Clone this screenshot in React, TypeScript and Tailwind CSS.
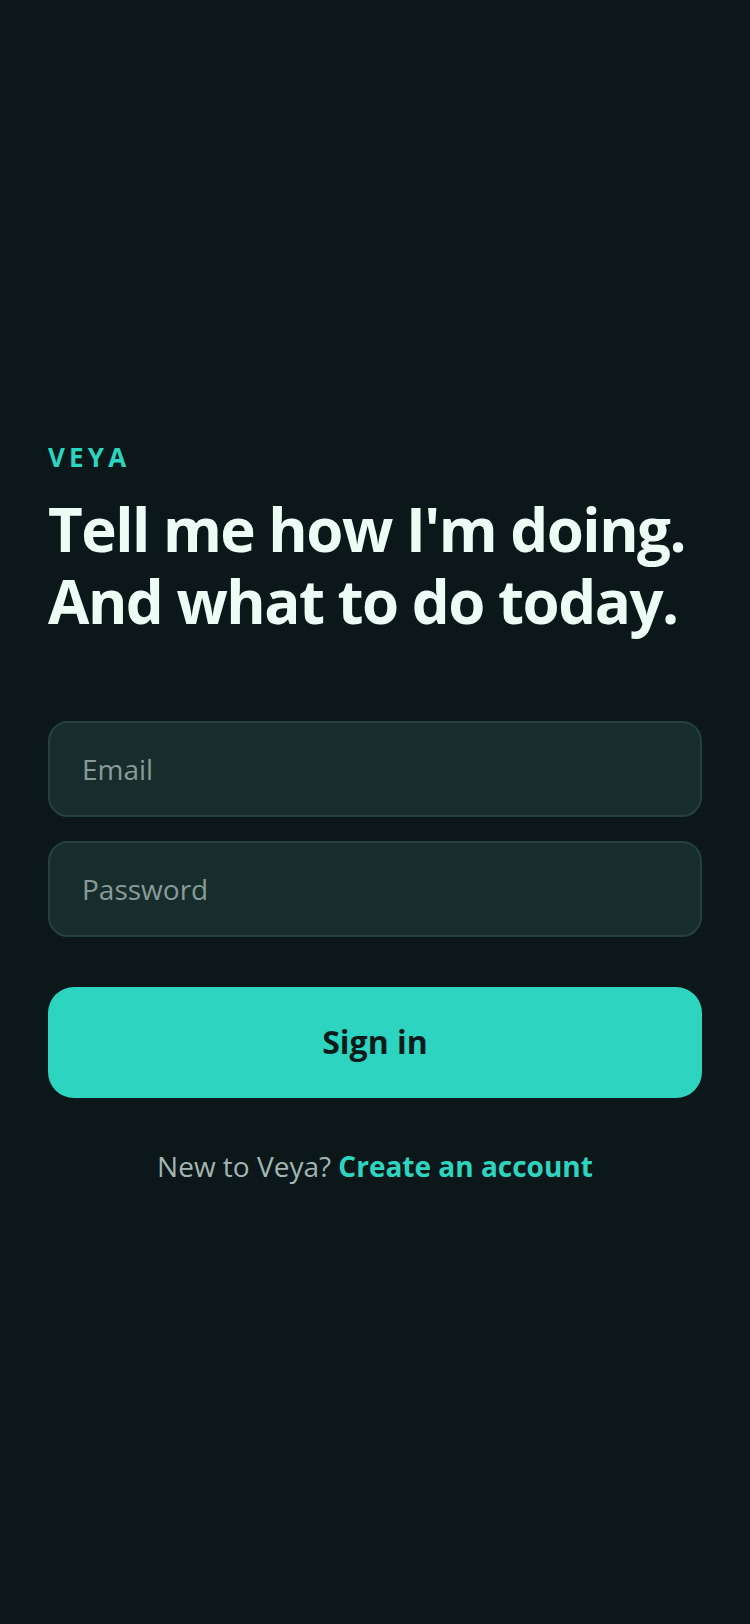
export default function App() {
  return (
    <div className="flex min-h-screen flex-col justify-center bg-[#0b1719] px-12 font-['Open_Sans',sans-serif]">
      <div className="text-[26px] font-bold leading-8 tracking-[0.16em] text-[#2dd4bf]">VEYA</div>
      <h1 className="mt-5 text-[60px] font-bold leading-[72px] tracking-[-0.025em] text-[#eefcf6]">
        Tell me how I'm doing.
        <br />
        And what to do today.
      </h1>

      <form className="mt-[84px] flex flex-col gap-6" onSubmit={(e) => e.preventDefault()}>
        <input
          type="email"
          placeholder="Email"
          className="h-24 rounded-[20px] border-2 border-[#26403e] bg-[#162d2c] px-8 text-[28px] text-[#eefcf6] outline-none placeholder:text-[#8a9a98]"
        />
        <input
          type="password"
          placeholder="Password"
          className="h-24 rounded-[20px] border-2 border-[#26403e] bg-[#162d2c] px-8 text-[28px] text-[#eefcf6] outline-none placeholder:text-[#8a9a98]"
        />
        <button
          type="submit"
          className="mt-[26px] h-[111px] rounded-[26px] bg-[#2dd4bf] text-[32px] font-bold text-[#0b1a1b]"
        >
          Sign in
        </button>
      </form>

      <p className="mt-[50px] text-center text-[28px] leading-9 text-[#a3b5b2]">
        New to Veya? <a href="#" className="font-bold text-[#2dd4bf]">Create an account</a>
      </p>
    </div>
  );
}
